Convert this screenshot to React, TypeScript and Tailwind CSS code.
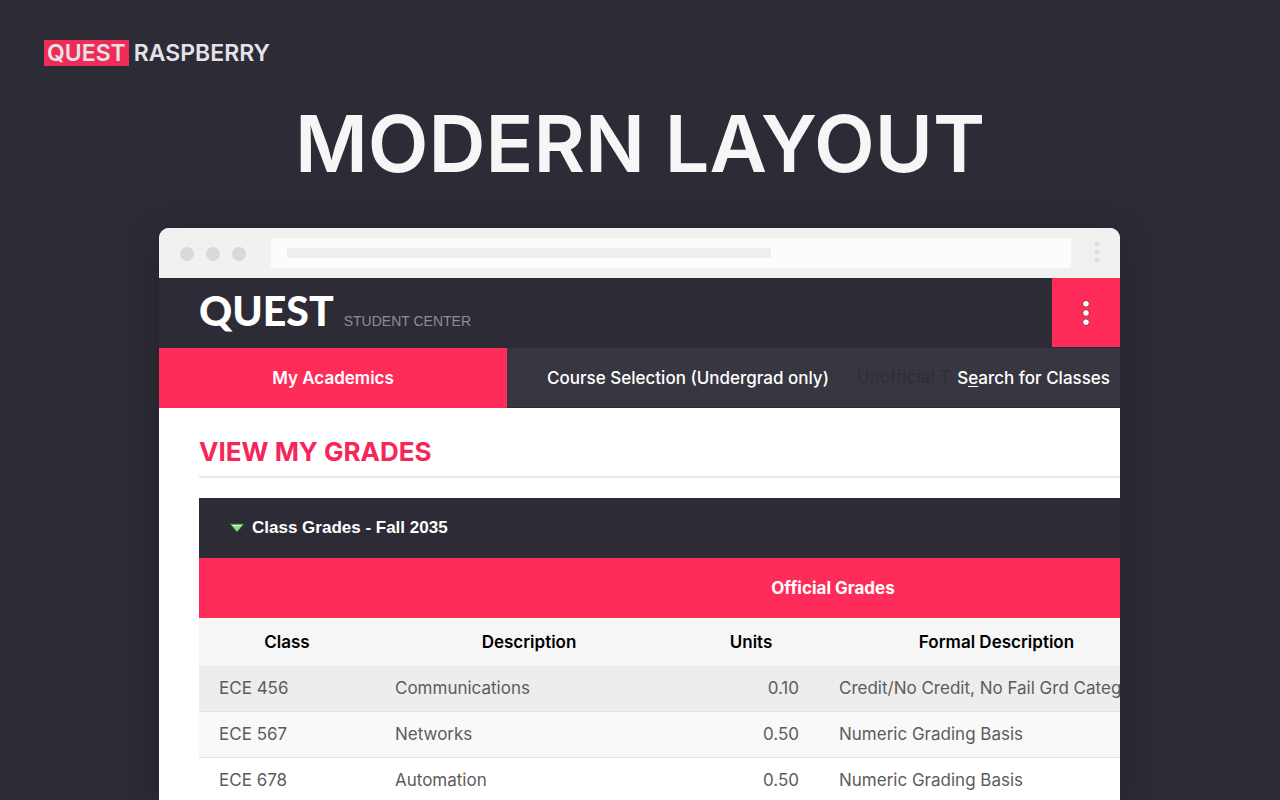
import React from "react";

const courses = [
  { code: "ECE 456", name: "Communications", units: "0.10", basis: "Credit/No Credit, No Fail Grd Categ", row: "bg-[#ededed]" },
  { code: "ECE 567", name: "Networks", units: "0.50", basis: "Numeric Grading Basis", row: "bg-[#f9f9f9]" },
  { code: "ECE 678", name: "Automation", units: "0.50", basis: "Numeric Grading Basis", row: "bg-white" },
];

function BrowserBar() {
  return (
    <div className="flex h-[50px] items-center bg-[#f1f1f1] pl-[21px] pr-[14px]">
      <div className="flex gap-3 pt-0.5">
        <span className="size-[14px] rounded-full bg-[#d9d9d9]" />
        <span className="size-[14px] rounded-full bg-[#d9d9d9]" />
        <span className="size-[14px] rounded-full bg-[#d9d9d9]" />
      </div>
      <div className="ml-[25px] flex h-[30px] flex-1 items-center bg-[#fcfcfc] px-4">
        <div className="h-[10px] w-[63%] bg-[#eeeeee]" />
      </div>
      <svg className="ml-[17px] h-6 w-[18px]" viewBox="0 0 18 24" fill="#e0e0e0" aria-hidden="true">
        <circle cx="9" cy="2.600" r="2.600" />
        <circle cx="9" cy="10.600" r="2.600" />
        <circle cx="9" cy="18.600" r="2.600" />
      </svg>
    </div>
  );
}

function SiteHeader() {
  return (
    <div className="flex h-[70px] justify-between bg-[#2d2c36] pl-10">
      <div className="flex items-baseline gap-[10px] pt-3">
        <span className="font-[Lato,sans-serif] text-[41px] leading-[42px] font-black text-white">QUEST</span>
        <span className="font-['Liberation_Sans',sans-serif] text-sm text-[#8e8d95]">STUDENT CENTER</span>
      </div>
      <button type="button" aria-label="Menu" className="flex h-[69px] w-[68px] items-center justify-center bg-[#ff2c5a]">
        <svg className="h-7 w-4" viewBox="0 0 16 28" fill="#fff" stroke="#a51f42" strokeWidth="1" aria-hidden="true">
          <circle cx="8" cy="4.800" r="3.400" />
          <circle cx="8" cy="14" r="3.400" />
          <circle cx="8" cy="23.200" r="3.400" />
        </svg>
      </button>
    </div>
  );
}

function Navigation() {
  return (
    <nav className="relative flex h-[60px] items-center border-b border-[#2d2c36] bg-[#383741] text-[17px] font-medium text-white">
      <a href="#academics" className="flex h-[60px] w-[348px] shrink-0 items-center justify-center bg-[#ff2c5a] pt-0.5 font-semibold">
        My Academics
      </a>
      <a href="#selection" className="w-[362px] shrink-0 pt-0.5 text-center whitespace-nowrap">
        Course Selection (Undergrad only)
      </a>
      <span className="absolute left-[698px] text-[#2f2e38]">Unofficial T</span>
      <a href="#search" className="relative ml-auto pt-0.5 pr-[10px] whitespace-nowrap">
        S<u className="underline-offset-2">e</u>arch for Classes
      </a>
    </nav>
  );
}

function GradesTable() {
  return (
    <table className="w-[1268px] table-fixed border-separate border-spacing-0 text-[17px]">
      <colgroup>
        <col className="w-44" />
        <col className="w-[308px]" />
        <col className="w-[136px]" />
        <col className="w-[355px]" />
        <col />
      </colgroup>
      <thead>
        <tr className="h-[60px] bg-[#ff2c5a] text-white">
          <th colSpan={5} className="pt-0.5 font-bold">Official Grades</th>
        </tr>
        <tr className="h-12 bg-[#f6f6f6] text-black">
          <th className="pt-0.5 font-semibold">Class</th>
          <th className="pt-0.5 font-semibold">Description</th>
          <th className="pt-0.5 font-semibold">Units</th>
          <th className="pt-0.5 font-semibold">Formal Description</th>
          <th />
        </tr>
      </thead>
      <tbody className="text-[#5c5c5c]">
        {courses.map((c) => (
          <tr key={c.code} className={`h-[46px] *:border-b *:border-[#e2e2e2] ${c.row}`}>
            <td className="px-5">{c.code}</td>
            <td className="px-5">{c.name}</td>
            <td className="px-5 text-right">{c.units}</td>
            <td className="px-5 whitespace-nowrap">{c.basis}</td>
            <td />
          </tr>
        ))}
      </tbody>
    </table>
  );
}

export default function App() {
  return (
    <div className="flex h-screen flex-col overflow-hidden bg-[#2d2c36] font-[Inter,sans-serif]">
      <header className="flex items-center gap-[5px] pt-10 pl-11 text-[23px] leading-[26px] font-semibold text-[#e4e3e8]">
        <span className="bg-[#ee2c57] px-[3px]">QUEST</span>
        <span>RASPBERRY</span>
      </header>
      <h1 className="pt-8 text-center text-[79px] leading-[90px] font-semibold whitespace-nowrap text-[#f6f6f6]">MODERN LAYOUT</h1>
      <div className="min-h-0 flex-1 pt-10 pr-40 pl-[159px]">
        <main className="h-full overflow-hidden rounded-t-[10px] bg-white shadow-[0_8px_36px_rgba(0,0,0,0.25)]">
          <BrowserBar />
          <SiteHeader />
          <Navigation />
          <section className="pl-10">
            <h2 className="border-b-2 border-[#e9e9e9] pt-7 pb-2 text-[26px] leading-8 font-bold text-[#f5275a]">VIEW MY GRADES</h2>
            <div className="mt-5 overflow-hidden">
              <button type="button" className="flex h-[60px] w-full items-center gap-[7px] bg-[#2d2c36] pl-[30px] font-['Liberation_Sans',sans-serif] text-[17px] font-bold text-white">
                <svg className="h-[10px] w-4" viewBox="0 0 16 10" aria-hidden="true">
                  <path d="M1 1h14L8 9z" fill="#8ee08c" stroke="#2f6b35" strokeWidth="1" />
                  <path d="M3 2h10l-1 1H4z" fill="#d4f6d0" />
                </svg>
                Class Grades - Fall 2035
              </button>
              <GradesTable />
            </div>
          </section>
        </main>
      </div>
    </div>
  );
}
